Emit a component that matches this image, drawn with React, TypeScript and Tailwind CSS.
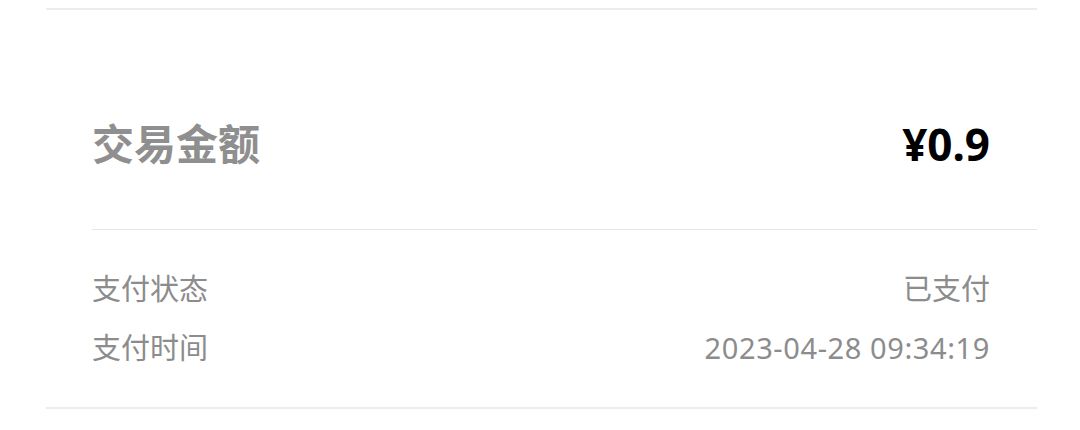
const font = "font-['Noto_Sans','Noto_Sans_CJK_SC',sans-serif]";

const Row = ({ label, value, wide }: { label: string; value: string; wide?: boolean }) => (
  <div className="flex items-center justify-between h-[59px] pr-[47px]">
    <span className="text-[29px] text-[#8c8c8c]">{label}</span>
    <span className={`text-[29px] text-[#8c8c8c] ${wide ? "tracking-[0.6px]" : ""}`}>{value}</span>
  </div>
);

export default function App() {
  return (
    <div className={`w-[1080px] h-[430px] bg-white ${font}`}>
      <div className="ml-[46px] mr-[43px] pt-[8px]">
        <div className="border-t-2 border-[#ececec] pl-[46px]">
          {/* Amount */}
          <div className="flex items-center justify-between pt-[112px] pb-[63px] pr-[47px]">
            <span className="text-[42px] font-bold text-[#8f8f8f] leading-none">交易金额</span>
            <span className="text-[44px] font-bold text-black leading-none">¥0.9</span>
          </div>
          <div className="border-t border-[#e6e6e6]" />
          <div className="pt-[29px] pb-[30px]">
            <Row label="支付状态" value="已支付" />
            <Row label="支付时间" value="2023-04-28 09:34:19" wide />
          </div>
        </div>
        <div className="border-t-2 border-[#ececec]" />
      </div>
    </div>
  );
}
